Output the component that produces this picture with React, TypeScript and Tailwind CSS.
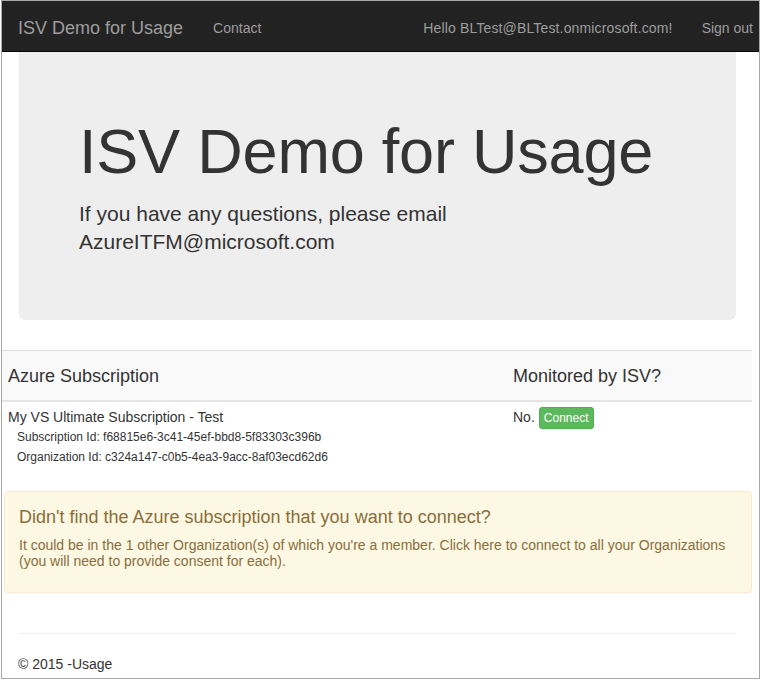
import React from "react";

export default function App() {
  return (
    <div className="w-[761px] h-[680px] bg-white font-['Liberation_Sans',Arial,sans-serif] text-[#333]">
      <div className="ml-px w-[759px] h-[679px] border border-[#a8a8a8] overflow-hidden flex flex-col">
        {/* Navbar */}
        <div className="h-[51px] shrink-0 bg-[#222] border-b border-[#080808] flex items-center pt-[3px] text-[#9d9d9d]">
          <span className="ml-[16px] text-[18px] leading-none">ISV Demo for Usage</span>
          <span className="ml-[30px] text-[14px] leading-none">Contact</span>
          <span className="ml-auto text-[14px] leading-none tracking-[0.15px]">Hello BLTest@BLTest.onmicrosoft.com!</span>
          <span className="ml-[29px] mr-[6px] text-[14px] leading-none">Sign out</span>
        </div>

        {/* Jumbotron */}
        <div className="ml-[17px] w-[717px] h-[268px] shrink-0 bg-[#eee] rounded-b-[6px] pl-[60px] pt-[65px]">
          <h1 className="text-[63px] leading-[69px] text-[#333] tracking-[-0.2px]">ISV Demo for Usage</h1>
          <p className="mt-[14px] text-[21px] leading-[28px] text-[#333]">
            If you have any questions, please email
            <br />
            AzureITFM@microsoft.com
          </p>
        </div>

        {/* Table */}
        <div className="mt-[30px] w-[750px] shrink-0">
          <div className="flex h-[52px] pt-[1px] bg-[#f9f9f9] border-t border-[#ddd] border-b-2 border-b-[#e4e4e4] items-center">
            <div className="w-[505px] pl-[6px] text-[18px]">Azure Subscription</div>
            <div className="pl-[6px] text-[18px]">Monitored by ISV?</div>
          </div>
          <div className="flex pt-[6px]">
            <div className="w-[505px] pl-[6px]">
              <div className="text-[14px] leading-[18px]">My VS Ultimate Subscription - Test</div>
              <div className="pl-[9px] text-[12px] leading-[20px] mt-[1px]">Subscription Id: f68815e6-3c41-45ef-bbd8-5f83303c396b</div>
              <div className="pl-[9px] text-[12px] leading-[20px]">Organization Id: c324a147-c0b5-4ea3-9acc-8af03ecd62d6</div>
            </div>
            <div className="pl-[6px] flex items-start">
              <span className="text-[14px] leading-[18px]">No.</span>
              <span className="ml-[4px] -mt-[1px] h-[22px] px-[4px] bg-[#5cb85c] border border-[#4cae4c] rounded-[3px] text-white text-[12px] leading-[20px]">
                Connect
              </span>
            </div>
          </div>
        </div>

        {/* Alert */}
        <div className="mt-[24px] ml-[2px] w-[748px] h-[102px] shrink-0 bg-[#fcf8e3] border border-[#faebcc] rounded-[4px] text-[#8a6d3b] pl-[14px] pt-[14px]">
          <div className="text-[18px] leading-[22px]">Didn't find the Azure subscription that you want to connect?</div>
          <p className="mt-[9px] text-[14px] leading-[16px]">
            It could be in the 1 other Organization(s) of which you're a member. Click here to connect to all your Organizations
            <br />
            (you will need to provide consent for each).
          </p>
        </div>

        {/* Footer */}
        <div className="mt-[40px] ml-[17px] w-[717px] border-t border-[#eee]"></div>
        <div className="ml-[16px] mt-[21px] text-[14px] leading-[18px]">© 2015 -Usage</div>
      </div>
    </div>
  );
}
